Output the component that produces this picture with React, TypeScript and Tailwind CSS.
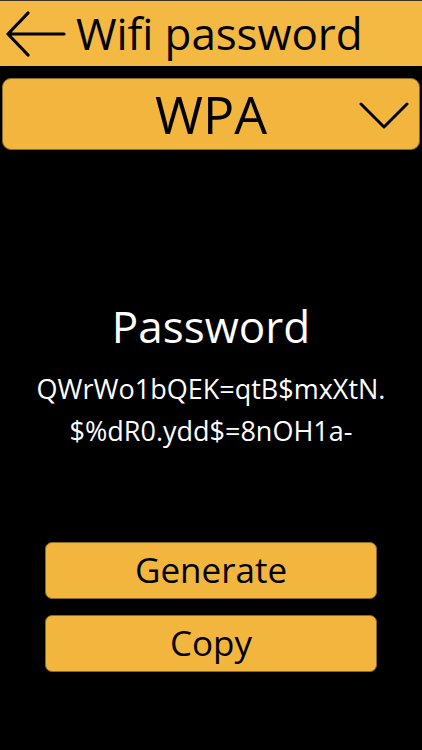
import { useState } from "react";

const font = { fontFamily: '"Open Sans", "Noto Sans", sans-serif' };

function BackArrow() {
  return (
    <svg width="60" height="46" viewBox="0 0 60 46" className="shrink-0">
      <path d="M22 2 L2 23 L22 44 M2 23 H58" fill="none" stroke="#000" strokeWidth="3.2" strokeLinecap="round" strokeLinejoin="round" />
    </svg>
  );
}

function Chevron() {
  return (
    <svg width="50" height="28" viewBox="0 0 50 28">
      <path d="M2 3 L25 26 L48 3" fill="none" stroke="#000" strokeWidth="3" strokeLinecap="round" strokeLinejoin="round" />
    </svg>
  );
}

export default function App() {
  const [password] = useState("QWrWo1bQEK=qtB$mxXtN.\n$%dR0.ydd$=8nOH1a-");

  return (
    <div className="flex h-[750px] w-[422px] flex-col bg-black" style={font}>
      <header className="flex h-[66px] items-center gap-[10px] border-t border-[#3a3222] bg-[#f4b942] pl-[6px]">
        <BackArrow />
        <h1 className="pb-[2px] text-[44px] leading-none tracking-[-0.1px] text-black">Wifi password</h1>
      </header>

      <div className="mx-[2px] mt-[12px] flex h-[72px] items-center justify-center rounded-[9px] border border-[#8a6a25] bg-[#f2b63f]">
        <span className="relative text-[52px] leading-none text-black">WPA</span>
        <div className="absolute right-[13px] top-[101px]">
          <Chevron />
        </div>
      </div>

      <section className="mt-[154px] flex flex-col items-center text-white">
        <h2 className="text-[44px] leading-none">Password</h2>
        <p className="mt-[20px] whitespace-pre-line text-center text-[27px] leading-[42px]">{password}</p>
      </section>

      <div className="mt-[90px] flex flex-col gap-[16px] px-[45px]">
        <button className="h-[57px] rounded-[7px] border border-[#8a6a25] bg-[#f2b63f] pb-[2px] text-[35px] leading-none text-black">Generate</button>
        <button className="h-[57px] rounded-[7px] border border-[#8a6a25] bg-[#f2b63f] pb-[2px] text-[35px] leading-none text-black">Copy</button>
      </div>
    </div>
  );
}
